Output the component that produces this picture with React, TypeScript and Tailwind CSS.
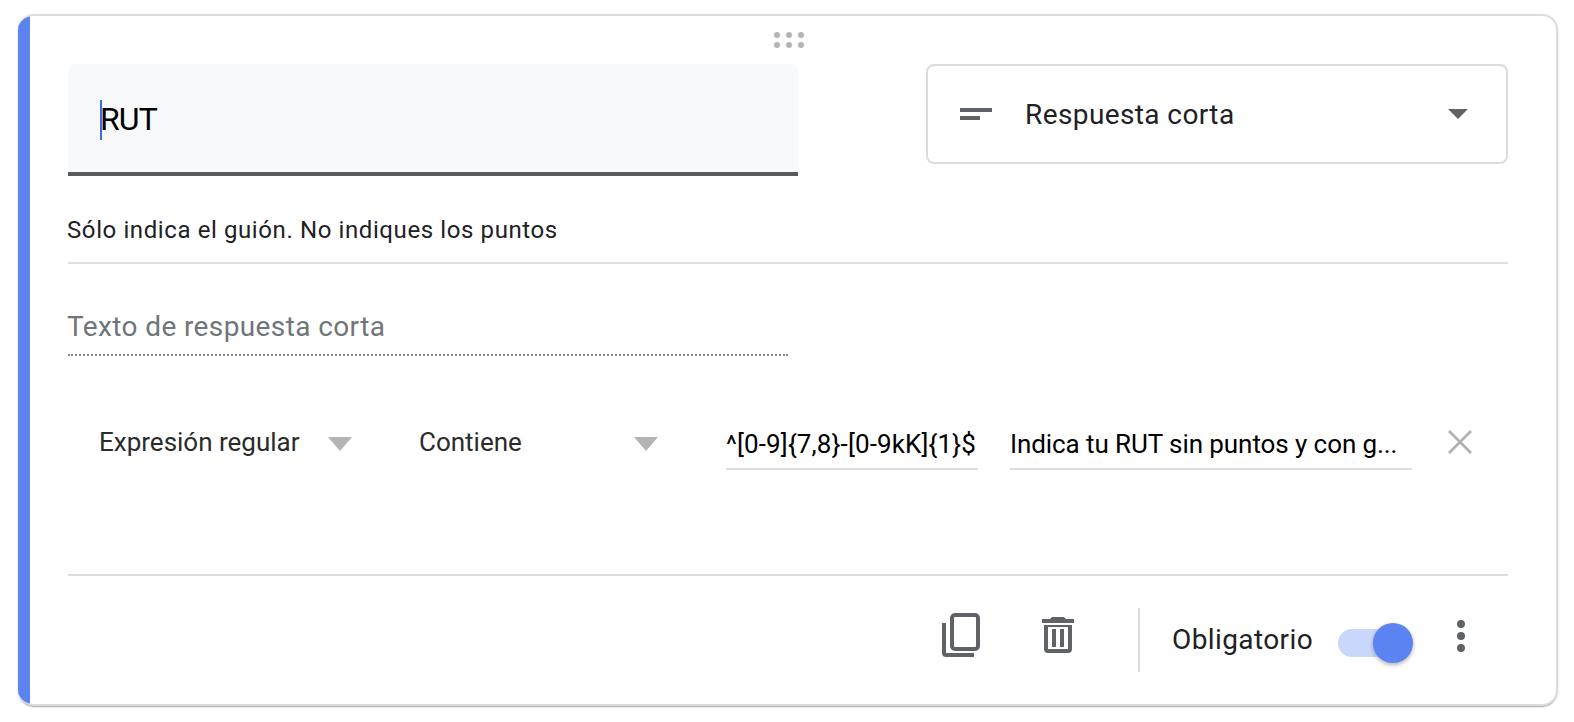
export default function App() {
  return (
    <div className="w-[1574px] h-[722px] bg-white pt-[14px] pl-[18px] overflow-hidden font-['Roboto',sans-serif]">
      <div className="w-[1540px] h-[692px] flex rounded-[16px] bg-white overflow-hidden border-2 border-[#dadce0] border-l-0 shadow-[0_2px_1px_-1px_rgba(0,0,0,0.25),0_1px_3px_rgba(0,0,0,0.12)]">
        <div className="w-[12px] shrink-0 bg-[#5b83f2] -my-[2px]" />
        <div className="flex-1 pl-[38px] pr-[48px] flex flex-col">
          <div className="h-[48px] pt-[16px] flex">
            <svg width="30" height="16" viewBox="0 0 30 16" className="ml-[706px] fill-[#b4b4b4]">
              <circle cx="3" cy="3" r="3" /><circle cx="15" cy="3" r="3" /><circle cx="27" cy="3" r="3" />
              <circle cx="3" cy="13" r="3" /><circle cx="15" cy="13" r="3" /><circle cx="27" cy="13" r="3" />
            </svg>
          </div>

          <div className="flex justify-between items-start">
            <div className="w-[730px] h-[112px] bg-[#f8f9fa] rounded-t-[8px] border-b-4 border-[#5a5a5a] pl-[32px] pt-[35px]">
              <span className="relative inline-block text-[32px] leading-[40px] tracking-[-0.9px] text-black">
                <span className="absolute left-0 top-[1px] w-[2px] h-[40px] bg-[#3f6ae0]" />
                RUT
              </span>
            </div>
            <div className="w-[582px] h-[100px] border-2 border-[#dadce0] rounded-[8px] flex items-center pl-[32px] pr-[38px]">
              <svg width="32" height="12" viewBox="0 0 32 12" className="fill-[#5f6368] shrink-0">
                <rect x="0" y="0" width="32" height="4" /><rect x="0" y="8" width="20" height="4" />
              </svg>
              <span className="ml-[33px] pt-[2px] flex-1 text-[28px] tracking-[0.4px] leading-[36px] text-[#202124]">Respuesta corta</span>
              <svg width="20" height="10" viewBox="0 0 20 10" className="fill-[#5f6368]"><path d="M0 0h20L10 10z" /></svg>
            </div>
          </div>

          <div className="mt-[40px] pb-[18px] border-b-2 border-[#e0e0e0] text-[24px] leading-[28px] tracking-[0.6px] text-[#202124]">
            <span className="-ml-px">Sólo indica el guión. No indiques los puntos</span>
          </div>

          <div className="mt-[46px] w-[720px] pb-[10px] border-b-2 border-dotted border-[#80868b] text-[28px] leading-[34px] tracking-[0.39px] text-[#70757a]">
            <span className="-ml-px">Texto de respuesta corta</span>
          </div>

          <div className="mt-[61px] h-[53px] flex items-start text-[26px] leading-[32px]">
            <div className="w-[284px] shrink-0 pl-[31px] pt-[9px] flex items-start justify-between text-[#2b2b2b]">
              <span className="whitespace-nowrap">Expresión regular</span>
              <svg width="24" height="14" viewBox="0 0 24 14" className="fill-[#b4b4b4] mt-[11px] shrink-0"><path d="M0 0h24L12 14z" /></svg>
            </div>
            <div className="ml-[67px] w-[239px] shrink-0 pt-[9px] flex items-start justify-between text-[#2b2b2b]">
              <span>Contiene</span>
              <svg width="24" height="14" viewBox="0 0 24 14" className="fill-[#b4b4b4] mt-[11px] shrink-0"><path d="M0 0h24L12 14z" /></svg>
            </div>
            <div className="ml-[68px] w-[252px] shrink-0 h-[53px] border-b-2 border-[#dcdcdc] pt-[11px] text-[26px] tracking-[0.14px] text-black whitespace-nowrap overflow-hidden">^[0-9]{"{"}7,8{"}"}-[0-9kK]{"{"}1{"}"}$</div>
            <div className="ml-[32px] w-[402px] shrink-0 h-[53px] border-b-2 border-[#dcdcdc] pt-[11px] text-[26px] tracking-[-0.08px] text-black whitespace-nowrap overflow-hidden">Indica tu RUT sin puntos y con g...</div>
            <svg width="24" height="24" viewBox="0 0 24 24" className="ml-[36px] mt-[13px] stroke-[#b0b0b0] shrink-0" fill="none" strokeWidth="2.6"><path d="M1 1l22 22M23 1L1 23" /></svg>
          </div>

          <div className="mt-[104px] border-t-2 border-[#dadce0] flex items-start">
            <svg width="38" height="44" viewBox="0 0 38 44" fill="none" className="ml-[874px] mt-[37px] stroke-[#5f6368] shrink-0" strokeWidth="4">
              <rect x="10" y="2" width="26" height="34" rx="3" />
              <path d="M2 10v30a2 2 0 0 0 2 2h28" />
            </svg>
            <svg width="32" height="36" viewBox="0 0 32 36" className="ml-[62px] mt-[41px] fill-[#5f6368] shrink-0">
              <path d="M10 0h12l2 2h8v4H0V2h8zM2 8h28v24a4 4 0 0 1-4 4H6a4 4 0 0 1-4-4zm4 2v22h20V10zM10 12h4v18h-4zM18 12h4v18h-4z" fillRule="evenodd" />
              <rect x="10" y="12" width="4" height="18" /><rect x="18" y="12" width="4" height="18" />
            </svg>
            <div className="ml-[64px] mt-[32px] w-[2px] h-[64px] bg-[#dadce0] shrink-0" />
            <span className="ml-[32px] mt-[47px] text-[28px] leading-[34px] tracking-[0.4px] text-[#202124]">Obligatorio</span>
            <div className="relative ml-[25px] mt-[53px] w-[63px] h-[28px] rounded-full bg-[#c9d7fa] shrink-0">
              <div className="absolute left-[35px] -top-[6px] w-[40px] h-[40px] rounded-full bg-[#5b83f2] shadow-[0_2px_4px_rgba(0,0,0,0.3)]" />
            </div>
            <svg width="8" height="32" viewBox="0 0 8 32" className="ml-[56px] mt-[44px] fill-[#5f6368] shrink-0">
              <circle cx="4" cy="4" r="4" /><circle cx="4" cy="16" r="4" /><circle cx="4" cy="28" r="4" />
            </svg>
          </div>
        </div>
      </div>
    </div>
  );
}
